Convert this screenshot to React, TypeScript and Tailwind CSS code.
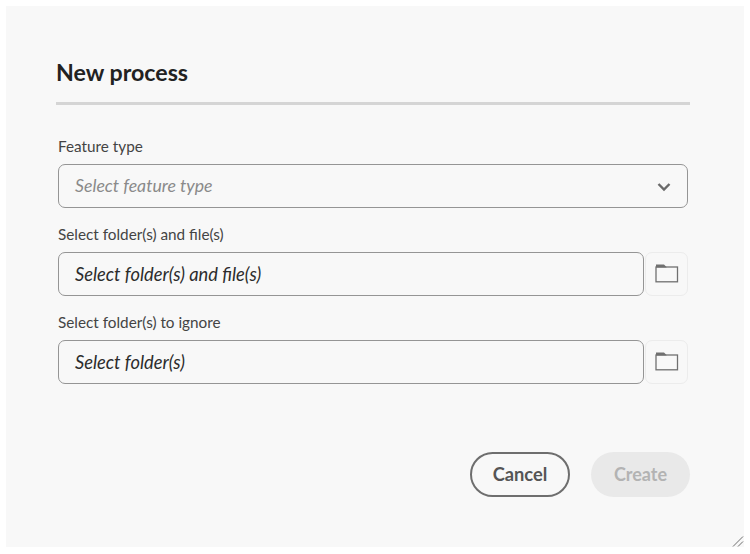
const fontClass = "font-['Lato','Noto_Sans',sans-serif]";

function Chevron() {
  return (
    <svg width="14" height="10" viewBox="0 0 14 10" fill="none" className="text-[#6a6a6a]">
      <path d="M1.5 2 L7 7.5 L12.5 2" stroke="currentColor" strokeWidth="2.4" />
    </svg>
  );
}

function FolderIcon() {
  return (
    <svg width="24" height="20" viewBox="0 0 24 20" fill="none">
      <path d="M1 3.5 V0.5 H9 L11.5 3 V3.5 Z" fill="#707070" />
      <rect x="1" y="3" width="21.5" height="14.8" fill="none" stroke="#707070" strokeWidth="1.3" />
    </svg>
  );
}

function FolderRow({ label, placeholder }: { label: string; placeholder: string }) {
  return (
    <div className="flex flex-col">
      <div className="mb-[6px] h-[24px] text-[15.3px] leading-[24px] text-[#444444]">{label}</div>
      <div className="flex h-[44px] gap-[1px]">
        <div className="flex flex-1 items-center rounded-[7px] border border-[#959595] pl-[16px] pt-[1px] text-[18.3px] italic text-[#2c2c2c]">
          {placeholder}
        </div>
        <button className="flex h-[44px] w-[43px] items-center justify-center rounded-[7px] border border-[#ececec]">
          <FolderIcon />
        </button>
      </div>
    </div>
  );
}

export default function App() {
  return (
    <div className={`h-[554px] w-[750px] overflow-hidden bg-white pl-[6px] pt-[6px] ${fontClass}`}>
      <div className="relative flex h-[541px] w-[738px] flex-col bg-[#f8f8f8] pl-[50px] pr-[54px] pt-[51px]">
        <h1 className="h-[30px] text-[23.2px] font-bold leading-[30px] text-[#222222]">New process</h1>
        <div className="mt-[15px] h-[3px] bg-[#d5d5d5]" />

        <div className="mt-[29px] flex flex-col gap-[14px] pl-[2px] pr-[2px]">
          <div className="flex flex-col">
            <div className="mb-[6px] h-[24px] text-[15.3px] leading-[24px] text-[#444444]">Feature type</div>
            <div className="flex h-[44px] items-center justify-between rounded-[7px] border border-[#959595] pl-[16px] pr-[16px] pt-[1px] text-[17.7px] italic text-[#8a8a8a]">
              <span>Select feature type</span>
              <Chevron />
            </div>
          </div>
          <FolderRow label="Select folder(s) and file(s)" placeholder="Select folder(s) and file(s)" />
          <FolderRow label="Select folder(s) to ignore" placeholder="Select folder(s)" />
        </div>

        <div className="mt-[68px] flex justify-end gap-[21px]">
          <button className="h-[45px] w-[100px] rounded-full border-[2.5px] border-[#6e6e6e] text-[18.3px] font-bold text-[#555555]">
            Cancel
          </button>
          <button className="h-[45px] w-[99px] rounded-full bg-[#e9e9e9] text-[18px] font-bold text-[#b3b3b3]">
            Create
          </button>
        </div>

        <svg width="12" height="12" viewBox="0 0 12 12" fill="none" className="absolute bottom-0 right-0">
          <path d="M1 11.5 L11 1.5 M6 11.5 L11 6.5" stroke="#6e6e6e" strokeWidth="1" />
        </svg>
      </div>
    </div>
  );
}
